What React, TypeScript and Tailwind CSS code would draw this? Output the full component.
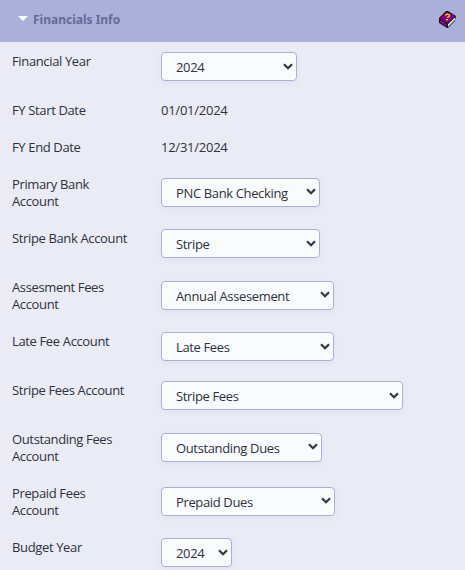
import { useState } from 'react';

type Row = {
  label: string;
  value: string;
  width?: string;
};

const rows: Row[] = [
  { label: 'Financial Year', value: '2024', width: 'w-[136px]' },
  { label: 'FY Start Date', value: '01/01/2024' },
  { label: 'FY End Date', value: '12/31/2024' },
  { label: 'Primary Bank Account', value: 'PNC Bank Checking', width: 'w-[159px]' },
  { label: 'Stripe Bank Account', value: 'Stripe', width: 'w-[159px]' },
  { label: 'Assesment Fees Account', value: 'Annual Assesement', width: 'w-[173px]' },
  { label: 'Late Fee Account', value: 'Late Fees', width: 'w-[173px]' },
  { label: 'Stripe Fees Account', value: 'Stripe Fees', width: 'w-[242px]' },
  { label: 'Outstanding Fees Account', value: 'Outstanding Dues', width: 'w-[161px]' },
  { label: 'Prepaid Fees Account', value: 'Prepaid Dues', width: 'w-[174px]' },
  { label: 'Budget Year', value: '2024', width: 'w-[71px]' },
];

export default function App() {
  const [open, setOpen] = useState(true);

  return (
    <main className="h-[570px] w-[465px] overflow-hidden bg-[#eaebf5] font-['Open_Sans',sans-serif] text-[13px] leading-[17px] tracking-[-0.36px] text-[#2d3142]">
      <header className="flex h-[42px] items-center bg-[#abb0da] pr-[9px] pb-[3px] pl-[18px]">
        <button
          type="button"
          onClick={() => setOpen(!open)}
          className="flex items-center gap-[5px] font-['Noto_Sans',sans-serif] text-[12px] font-bold tracking-normal text-[#666a98]"
        >
          <svg width="10" height="5" viewBox="0 0 10 5" className="mb-[2px]">
            <path d="M0 0h10L5 5z" fill="#fafcff" />
          </svg>
          Financials Info
        </button>
        <HelpBook />
      </header>

      {open && rows.map((row) => <InfoRow key={row.label} {...row} />)}
    </main>
  );
}

function InfoRow({ label, value, width }: Row) {
  return (
    <div className="flex py-[10px] pl-[12px]">
      <div className="-mb-px w-[149px] pt-px pr-[29px]">{label}</div>
      {width ? (
        <Select value={value} width={width} />
      ) : (
        <div className="-mb-px pt-px tracking-[-0.25px]">{value}</div>
      )}
    </div>
  );
}

function Select({ value, width }: { value: string; width: string }) {
  return (
    <button
      type="button"
      className={`flex h-[29px] items-center justify-between self-center rounded-[4px] border border-[#abb0da] bg-[#fafbfd] pr-[3px] pl-[14px] whitespace-nowrap shadow-[0_2px_6px_rgba(120,130,180,.08)] ${width}`}
    >
      <span className="pt-[2px]">{value}</span>
      <svg width="10" height="7" viewBox="0 0 10 7" className="mb-[1px] shrink-0">
        <path d="M1 1.2l4 4 4-4" fill="none" stroke="#333847" strokeWidth="2.2" />
      </svg>
    </button>
  );
}

function HelpBook() {
  return (
    <svg width="17" height="17" viewBox="0 0 17 17" className="ml-auto">
      <path d="M7 0h2l8 5-1 5-7 7H8l-8-5V7z" fill="#1a101a" />
      <path d="M8 1l8 4-7 7-8-4.5z" fill="#850085" />
      <path d="M1 9l7 4.5V16l-7-4.5z" fill="#850085" />
      <path d="M9 13.2l7-6.7V9l-7 7z" fill="#f0f0ea" />
      <path d="M9.5 14.8l6-6" fill="none" stroke="#999" strokeWidth=".6" />
      <path d="M6 4.2l2.2-1.2 2.3 1-.5 1.6-2 .9" fill="none" stroke="#ffe500" strokeWidth="1.3" />
      <path d="M7 8h2v1.3H7z" fill="#ffe500" />
    </svg>
  );
}
